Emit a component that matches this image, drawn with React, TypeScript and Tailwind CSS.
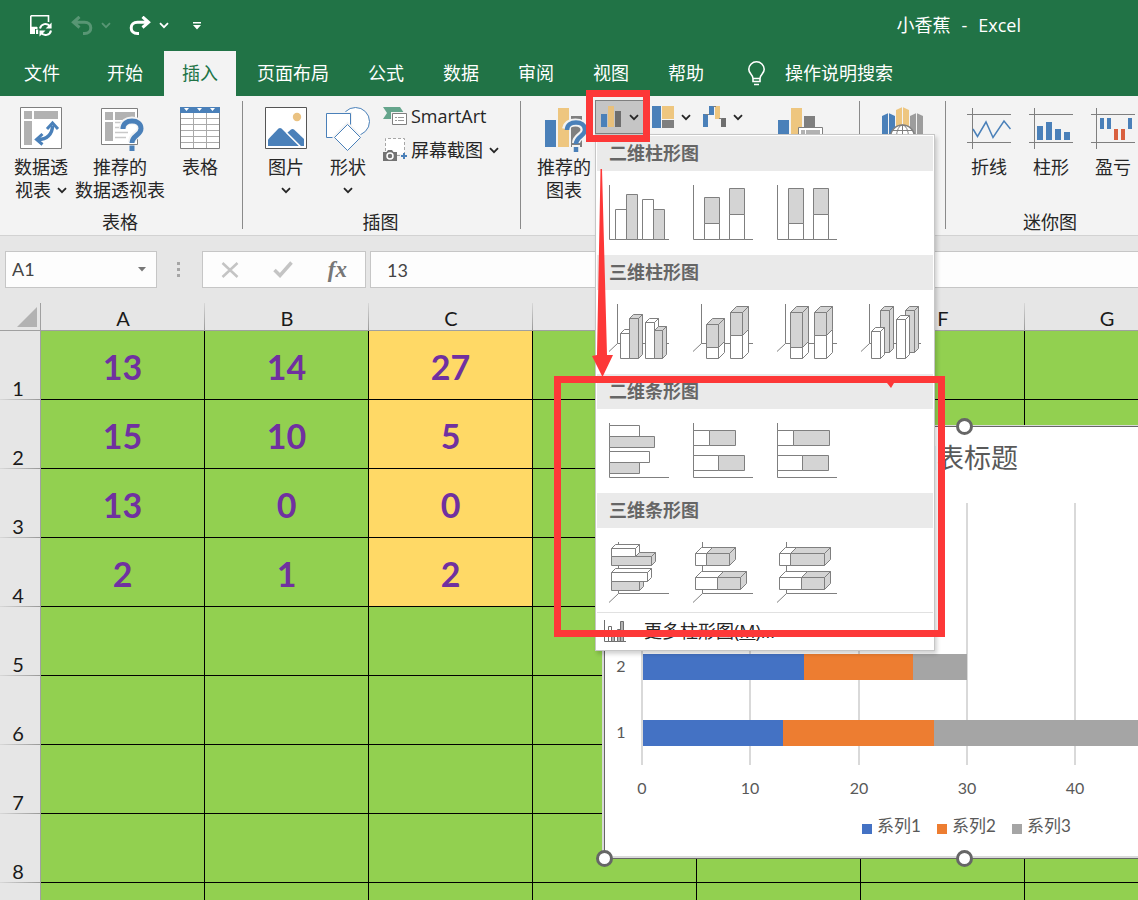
import { useState, type ReactNode } from "react";

const uiFont = "font-['Open_Sans','Noto_Sans_CJK_SC',sans-serif]";
const sheetFont = "font-['Lato','Noto_Sans_CJK_SC',sans-serif]";

const tabs = ["文件", "开始", "插入", "页面布局", "公式", "数据", "审阅", "视图", "帮助"];
const columns = ["A", "B", "C", "D", "E", "F", "G"];
const rows = [
  [13, 14, 27],
  [15, 10, 5],
  [13, 0, 0],
  [2, 1, 2],
  [],
  [],
  [],
  [],
  [],
];

const seriesColors = ["#4472c4", "#ed7d31", "#a5a5a5"];

// horizontal position of a value inside the chart area
const toX = (value: number) => 37 + Math.round(value * 10.83);

const LINE = "#7f7f7f";
const SHADE = "#d4d4d4";

function Chevron({ className = "" }: { className?: string }) {
  return (
    <svg width="10" height="7" viewBox="0 0 10 7" className={`shrink-0 ${className}`} fill="none" stroke="currentColor" strokeWidth="1.8">
      <path d="M1 1.2 5 5.2 9 1.2" />
    </svg>
  );
}

/* ---------- ribbon icons ---------- */

function SaveIcon() {
  return (
    <svg width="23" height="22" viewBox="0 0 23 22" fill="none">
      <path d="M0.8 0.8H18.5V7M0.8 0.8V18.2M0 12.5H7" stroke="#fff" strokeWidth="1.6" />
      <path d="M0 12h7.5v2H5v5H0z" fill="#fff" />
      <path d="M6 14.5h2.2v4.5H6z" fill="#fff" />
      <path d="M10 13.5a5.6 5.6 0 0 1 10-2.2M21 15.5a5.6 5.6 0 0 1-10 2.2" stroke="#fff" strokeWidth="2" />
      <path d="M21.6 7.5v6h-6zM9.5 21.5v-6h6z" fill="#fff" />
    </svg>
  );
}

function UndoIcon() {
  return (
    <svg width="22" height="20" viewBox="0 0 22 20" fill="none" stroke="currentColor" strokeWidth="3">
      <path d="M8.500 .8 2.400 6.300l6.100 5.200M3 6.300h10.500c4 0 6.300 2.400 6.300 5.600s-2.300 5.600-6.300 5.600H12" />
    </svg>
  );
}

function PivotIcon() {
  return (
    <svg width="42" height="42" viewBox="0 0 42 42">
      <path d="M.5.5h41v41H.5z" fill="#fff" stroke="#7f7f7f" />
      <path d="M4 4h8v8H4zM14 4h24v8H14zM4 14h8v24H4z" fill="#b2b2b2" />
      <path d="M18 32.500C27 32.500 32.500 27 32.500 18.500" fill="none" stroke="#4a80b9" strokeWidth="3.400" />
      <path d="m27 22 5.500-6 5.500 6M22.500 27l-6 5.500 6 5" fill="none" stroke="#4a80b9" strokeWidth="3" />
    </svg>
  );
}

function RecommendedPivotIcon() {
  return (
    <svg width="50" height="44" viewBox="-6 0 50 44">
      <path d="M.5 1.500h36v36H.5z" fill="#fff" stroke="#7f7f7f" />
      <path d="M4 5h8v8H4zM14 5h20v8H14zM4 15h8v19H4z" fill="#b2b2b2" />
      <path d="M14 15.500h20M14 20.500h9M14 25.500h13M14 30.500h11" stroke="#c9c9c9" strokeWidth="1.500" />
      <path d="M22 21c0-5 4-7.500 9-7.500s9 2.500 9 7.500c0 7-9 6-9 14M31 38v6" fill="none" stroke="#f3f3f3" strokeWidth="8" />
      <path d="M22 22c0-5.500 4-8 9-8s9 2.500 9 7.500c0 7-9 6.500-9 14.500M31 38.500V44" fill="none" stroke="#4a80b9" strokeWidth="5" />
    </svg>
  );
}

function TableIcon() {
  return (
    <svg width="40" height="42" viewBox="0 0 40 42">
      <path d="M.5.5h39v41H.5z" fill="#fff" stroke="#7f7f7f" />
      <path d="M0 0h40v6H0z" fill="#4a80b9" />
      <path d="M4 1h5L6.500 4zM17 1h5l-2.500 3zM30 1h5l-2.500 3z" fill="#fff" />
      <path d="M1 11.500h38M1 17.500h38M1 23.500h38M1 29.500h38M1 35.500h38M13.500 6v35M26.500 6v35" stroke="#aaa" fill="none" />
    </svg>
  );
}

function PictureIcon() {
  return (
    <svg width="42" height="42" viewBox="0 0 42 42">
      <path d="M.5.5h41v41H.5z" fill="#fff" stroke="#555" />
      <circle cx="32" cy="10" r="4.200" fill="#eac282" />
      <path d="M3 32.500 13.500 21.500q1.500-1 3 0L34 39H3z" fill="#4a80b9" />
      <path d="m22 26 4-3.500q1.500-1 3 0L39 32v7h-4z" fill="#4a80b9" />
      <path d="M21.500 25.500 35.500 39.500" stroke="#fff" strokeWidth="1.300" />
    </svg>
  );
}

function ShapesIcon() {
  return (
    <svg width="44" height="44" viewBox="0 0 44 44" fill="#fff" stroke="#4a80b9">
      <circle cx="29.500" cy="14.500" r="14" />
      <path d="M-1 5h27v28H-1z" fill="#f3f3f3" stroke="none" />
      <path d="M.5 6.500h24v24H.5z" />
      <path d="M21.500 14.500 37 30 21.500 45.500 6 30z" fill="#f3f3f3" stroke="none" />
      <path d="M21.500 17.500 34.500 30.500 21.500 43.500 8.500 30.500z" />
    </svg>
  );
}

function SmartArtIcon() {
  return (
    <svg width="24" height="18" viewBox="0 0 24 18">
      <path d="M0 0h17l4 6-4 6H0l4-6z" fill="#65a58c" />
      <path d="M8 5h17v14H8z" fill="#f3f3f3" />
      <path d="M9.500 6.500h14v11h-14z" fill="#fff" stroke="#7f7f7f" />
      <path d="M12 10.500h2M15 10.500h6M12 13.500h2M15 13.500h6" stroke="#999" />
    </svg>
  );
}

function ScreenshotIcon() {
  return (
    <svg width="24" height="24" viewBox="0 0 24 24">
      <path d="M2.500.5h19V16h-19z" fill="#fff" />
      <path d="M2.500 13V.5h19V15M14 17.500h3" fill="none" stroke="#a6a6a6" strokeDasharray="3 2" />
      <path d="M0 14h3.500l1.500-2h4l1.500 2H14v9H0z" fill="#727272" />
      <circle cx="7" cy="18" r="3" fill="none" stroke="#fff" strokeWidth="1.500" />
      <path d="M21 15v6M18 18h6" stroke="#4a80b9" strokeWidth="2" />
    </svg>
  );
}

function RecommendedChartIcon() {
  return (
    <svg width="46" height="45" viewBox="-4 -1 46 45">
      <path d="M0 12h11v27H0z" fill="#4a80b9" />
      <path d="M13 0h11v39H13z" fill="#eec67f" />
      <path d="M26 8h11v31H26z" fill="#7f7f7f" />
      <path d="M21 21c1-5 5-6.500 9.500-6.500s9 2 9 7.500c0 6-8.500 6.500-8.500 13M31 37v7" fill="none" stroke="#f3f3f3" strokeWidth="8" />
      <path d="M22 22c0-5 4-7.500 9-7.500s9 2.500 9 7.500c0 6-9 6.500-9 14M31 39v5" fill="none" stroke="#4a80b9" strokeWidth="4.500" />
    </svg>
  );
}

function ColumnChartIcon() {
  return (
    <svg width="20" height="22" viewBox="0 0 20 22">
      <path d="M0 8h6v13H0z" fill="#4a80b9" />
      <path d="M7 0h6v21H7z" fill="#e8c07c" />
      <path d="M14 5h6v16h-6z" fill="#6e6e6e" />
    </svg>
  );
}

function TreemapIcon() {
  return (
    <svg width="22" height="22" viewBox="0 0 22 22">
      <path d="M0 0h9v22H0z" fill="#4a80b9" />
      <path d="M10 0h12v13H10z" fill="#eec67f" />
      <path d="M10 14h12v8H10z" fill="#7f7f7f" />
    </svg>
  );
}

function WaterfallIcon() {
  return (
    <svg width="23" height="22" viewBox="0 0 23 22">
      <path d="M0 8h5v13H0zM6 0h5v9H6z" fill="#4a80b9" />
      <path d="M12 0h5v13h-5z" fill="#eec67f" />
      <path d="M18 12h5v9h-5z" fill="#6e6e6e" />
      <path d="M2.500 8.500H6M10 .5h3M16 12.500h3" stroke="#7f7f7f" />
    </svg>
  );
}

function PivotChartIcon() {
  return (
    <svg width="46" height="43" viewBox="0 -1 46 43">
      <path d="M0 12h11v27H0z" fill="#4a80b9" />
      <path d="M13 0h11v39H13z" fill="#eec67f" />
      <path d="M26 8h11v20H26z" fill="#7f7f7f" />
      <path d="M20.500 19.500h24v22h-24z" fill="#fff" stroke="#7f7f7f" />
      <path d="M23 22h4v4h-4zM28 22h14v4H28z" fill="#b2b2b2" />
    </svg>
  );
}

function MapIcon() {
  return (
    <svg width="42" height="44" viewBox="0 0 42 44">
      <path d="M0 9 6.500 6 13 9v30H0z" fill="#4a80b9" />
      <path d="M14 3 20.500 0 27 3v30H14z" fill="#eec67f" />
      <path d="m28 9 6.500-3L41 9v30H28z" fill="#9d9d9d" />
      <path d="M6.500 6v30M20.500 0v20M34.500 6v30" stroke="#f3f3f3" />
      <circle cx="20.500" cy="30" r="12" fill="#fff" stroke="#7f7f7f" strokeWidth="1.500" />
      <path d="M20.500 18v24M8.500 30h24M11 23.500h19" stroke="#7f7f7f" fill="none" />
      <ellipse cx="20.500" cy="30" rx="6" ry="12" fill="none" stroke="#7f7f7f" />
    </svg>
  );
}

function SparkFrame({ children }: { children: ReactNode }) {
  return (
    <svg width="44" height="42" viewBox="0 0 44 42" fill="none">
      <path d="M0 7.500h44M0 35.500h44M5.500 1v41" stroke="#7f7f7f" />
      {children}
    </svg>
  );
}

const sparklines = [
  {
    label: "折线",
    art: <path d="m6 22 4.500 7.500L19 15l7 15.500L37 14l6.500 8" stroke="#4a80b9" strokeWidth="1.500" />,
  },
  {
    label: "柱形",
    art: <path d="M8 19h6v14H8zM17 15h6v18h-6zM26 22h6v11h-6zM35 25h6v8h-6z" fill="#4a80b9" />,
  },
  {
    label: "盈亏",
    art: (
      <>
        <path d="M9 11h4v11H9zM16 11h4v11h-4zM37 11h4v11h-4z" fill="#4a80b9" />
        <path d="M23 22h4v11h-4zM30 22h4v11h-4z" fill="#d9603f" />
      </>
    ),
  },
];

/* ---------- gallery thumbnails ---------- */

type BoxProps = { x: number; y: number; r: number; b: number; d?: number; shade?: boolean };

// x/y/r/b are the edges of the front face, d is the depth of the side faces
function Box({ x, y, r, b, d = 0, shade = false }: BoxProps) {
  return (
    <g fill={shade ? SHADE : "#fff"} stroke={LINE} strokeLinejoin="round">
      {d > 0 ? (
        <>
          <path d={`M${x} ${y}L${x + d} ${y - d}H${r + d}L${r} ${y}Z`} />
          <path d={`M${r} ${y}L${r + d} ${y - d}V${b - d}L${r} ${b}Z`} />
        </>
      ) : null}
      <path d={`M${x} ${y}H${r}V${b}H${x}Z`} />
    </g>
  );
}

type Thumb = { name: string; boxes: BoxProps[] };
type Section = { title: string; axis: string; thumbs: Thumb[] };

const flatAxis = "M.5 2V56.500H60";
const columnAxis3d = "M8.500 2V41.500H60M8.500 41.500 0 49.500";
const barAxis3d = "M9.500 2V53.500H60M9.500 53.500 0 62.500";

const sections: Section[] = [
  {
    title: "二维柱形图",
    axis: flatAxis,
    thumbs: [
      {
        name: "簇状柱形图",
        boxes: [
          { x: 6.5, y: 26.5, r: 17.5, b: 56.5 },
          { x: 17.5, y: 11.5, r: 28.5, b: 56.5, shade: true },
          { x: 33.5, y: 16.5, r: 44.5, b: 56.5 },
          { x: 44.5, y: 26.5, r: 55.5, b: 56.5, shade: true },
        ],
      },
      {
        name: "堆积柱形图",
        boxes: [
          { x: 11.5, y: 40.5, r: 26.5, b: 56.5 },
          { x: 11.5, y: 14.5, r: 26.5, b: 40.5, shade: true },
          { x: 36.5, y: 31.5, r: 51.5, b: 56.5 },
          { x: 36.5, y: 5.5, r: 51.5, b: 31.5, shade: true },
        ],
      },
      {
        name: "百分比堆积柱形图",
        boxes: [
          { x: 11.5, y: 40.5, r: 26.5, b: 56.5 },
          { x: 11.5, y: 5.5, r: 26.5, b: 40.5, shade: true },
          { x: 36.5, y: 31.5, r: 51.5, b: 56.5 },
          { x: 36.5, y: 5.5, r: 51.5, b: 31.5, shade: true },
        ],
      },
    ],
  },
  {
    title: "三维柱形图",
    axis: columnAxis3d,
    thumbs: [
      {
        name: "三维簇状柱形图",
        boxes: [
          { x: 11.5, y: 31.5, r: 20.5, b: 56.5, d: 4 },
          { x: 20.5, y: 16.5, r: 29.5, b: 56.5, d: 4, shade: true },
          { x: 36.5, y: 20.5, r: 45.5, b: 56.5, d: 4 },
          { x: 45.5, y: 28.5, r: 53.5, b: 56.5, d: 4, shade: true },
        ],
      },
      {
        name: "三维堆积柱形图",
        boxes: [
          { x: 13.5, y: 45.5, r: 25.5, b: 56.5, d: 6 },
          { x: 13.5, y: 22.5, r: 25.5, b: 45.5, d: 6, shade: true },
          { x: 37.5, y: 33.5, r: 49.5, b: 56.5, d: 6 },
          { x: 37.5, y: 10.5, r: 49.5, b: 33.5, d: 6, shade: true },
        ],
      },
      {
        name: "三维百分比堆积柱形图",
        boxes: [
          { x: 13.5, y: 45.5, r: 25.5, b: 56.5, d: 6 },
          { x: 13.5, y: 10.5, r: 25.5, b: 45.5, d: 6, shade: true },
          { x: 37.5, y: 33.5, r: 49.5, b: 56.5, d: 6 },
          { x: 37.5, y: 10.5, r: 49.5, b: 33.5, d: 6, shade: true },
        ],
      },
      {
        name: "三维柱形图",
        boxes: [
          { x: 19.5, y: 8.5, r: 28.5, b: 50.5, d: 4, shade: true },
          { x: 10.5, y: 29.5, r: 19.5, b: 56.5, d: 4 },
          { x: 44.5, y: 8.5, r: 53.5, b: 50.5, d: 4, shade: true },
          { x: 35.5, y: 17.5, r: 44.5, b: 56.5, d: 4 },
        ],
      },
    ],
  },
  {
    title: "二维条形图",
    axis: flatAxis,
    thumbs: [
      {
        name: "簇状条形图",
        boxes: [
          { x: 0.5, y: 4.5, r: 30.5, b: 15.5 },
          { x: 0.5, y: 15.5, r: 45.5, b: 26.5, shade: true },
          { x: 0.5, y: 30.5, r: 40.5, b: 41.5 },
          { x: 0.5, y: 41.5, r: 30.5, b: 52.5, shade: true },
        ],
      },
      {
        name: "堆积条形图",
        boxes: [
          { x: 0.5, y: 9.5, r: 16.5, b: 24.5 },
          { x: 16.5, y: 9.5, r: 42.5, b: 24.5, shade: true },
          { x: 0.5, y: 34.5, r: 25.5, b: 49.5 },
          { x: 25.5, y: 34.5, r: 51.5, b: 49.5, shade: true },
        ],
      },
      {
        name: "百分比堆积条形图",
        boxes: [
          { x: 0.5, y: 9.5, r: 16.5, b: 24.5 },
          { x: 16.5, y: 9.5, r: 52.5, b: 24.5, shade: true },
          { x: 0.5, y: 34.5, r: 25.5, b: 49.5 },
          { x: 25.5, y: 34.5, r: 51.5, b: 49.5, shade: true },
        ],
      },
    ],
  },
  {
    title: "三维条形图",
    axis: barAxis3d,
    thumbs: [
      {
        name: "三维簇状条形图",
        boxes: [
          { x: 2.5, y: 16.5, r: 42.5, b: 25.5, d: 4, shade: true },
          { x: 2.5, y: 8.5, r: 26.5, b: 16.5, d: 4 },
          { x: 2.5, y: 41.5, r: 30.5, b: 50.5, d: 4, shade: true },
          { x: 2.5, y: 32.5, r: 38.5, b: 41.5, d: 4 },
        ],
      },
      {
        name: "三维堆积条形图",
        boxes: [
          { x: 2.5, y: 13.5, r: 13.5, b: 25.5, d: 6 },
          { x: 13.5, y: 13.5, r: 36.5, b: 25.5, d: 6, shade: true },
          { x: 2.5, y: 37.5, r: 24.5, b: 49.5, d: 6 },
          { x: 24.5, y: 37.5, r: 47.5, b: 49.5, d: 6, shade: true },
        ],
      },
      {
        name: "三维百分比堆积条形图",
        boxes: [
          { x: 2.5, y: 13.5, r: 13.5, b: 25.5, d: 6 },
          { x: 13.5, y: 13.5, r: 47.5, b: 25.5, d: 6, shade: true },
          { x: 2.5, y: 37.5, r: 24.5, b: 49.5, d: 6 },
          { x: 24.5, y: 37.5, r: 47.5, b: 49.5, d: 6, shade: true },
        ],
      },
    ],
  },
];

function ChartGallery() {
  return (
    <div className="absolute left-0 top-[34px] z-20 w-[340px] border border-[#c6c6c6] bg-white p-px shadow-[2px_3px_4px_rgba(0,0,0,.18)]">
      {sections.map((section) => (
        <section key={section.title}>
          <h3 className="h-[35px] bg-[#eaeaea] pl-3 text-[18px] font-bold leading-[34px] text-[#666]">{section.title}</h3>
          <div className="flex">
            {section.thumbs.map((thumb) => (
              <button key={thumb.name} type="button" aria-label={thumb.name} className="p-3">
                <svg width="60" height="60" viewBox="0 0 60 60" className="overflow-visible">
                  <path d={section.axis} fill="none" stroke={LINE} />
                  {thumb.boxes.map((box, index) => (
                    <Box key={index} {...box} />
                  ))}
                </svg>
              </button>
            ))}
          </div>
        </section>
      ))}
      <button type="button" className="flex h-[37px] w-full items-center border-t border-[#e1e1e1] pl-[7px] text-[18px] text-[#262626]">
        <svg width="22" height="22" viewBox="0 0 22 22" fill="#fff" stroke="#6e6e6e" className="mr-[18px] shrink-0">
          <path d="M.5 0v21.500H22" fill="none" />
          <path d="M4.500 6.500h3v15h-3zM10.500 12.500h3v9h-3z" />
          <path d="M7.500 11.500h3v10h-3zM13.500 9.500h3v12h-3zM16.500 1.500h3v20h-3z" fill="#b2b2b2" />
        </svg>
        <span>
          更多柱形图(<u>M</u>)...
        </span>
      </button>
    </div>
  );
}

/* ---------- ribbon ---------- */

type BigButtonProps = { icon: ReactNode; lines: string[]; menu?: "inline" | "below"; className: string };

function BigButton({ icon, lines, menu, className }: BigButtonProps) {
  return (
    <button type="button" className={`flex shrink-0 flex-col items-center leading-[23px] ${className}`}>
      <span className="mb-1 flex h-[46px] items-start pt-px">{icon}</span>
      {lines.map((line, index) => (
        <span key={line} className="flex items-center gap-1.5 whitespace-nowrap">
          {line}
          {menu === "inline" && index === lines.length - 1 ? <Chevron /> : null}
        </span>
      ))}
      {menu === "below" ? <Chevron className="mt-2" /> : null}
    </button>
  );
}

function Group({ title, className = "", children }: { title: string; className?: string; children: ReactNode }) {
  return (
    <div className={`flex shrink-0 flex-col pt-2.5 ${className}`}>
      <div className="flex h-[105px] items-start">{children}</div>
      <p className="pr-0.5 text-center leading-[23px]">{title}</p>
    </div>
  );
}

function Divider() {
  return <div className="mt-[5px] h-32 w-px shrink-0 bg-[#8a8a8a]" />;
}

function Ribbon() {
  const [open, setOpen] = useState(true);

  return (
    <div className="flex h-[140px] shrink-0 border-b border-[#d2d2d2] bg-[#f3f3f3] text-[18px] text-[#262626]">
      <Group title="表格" className="px-2.5">
        <BigButton icon={<PivotIcon />} lines={["数据透", "视表"]} menu="inline" className="w-[62px]" />
        <BigButton icon={<RecommendedPivotIcon />} lines={["推荐的", "数据透视表"]} className="w-24" />
        <BigButton icon={<TableIcon />} lines={["表格"]} className="w-16" />
      </Group>
      <Divider />
      <Group title="插图" className="w-[277px] px-3">
        <BigButton icon={<PictureIcon />} lines={["图片"]} menu="below" className="w-[62px]" />
        <BigButton icon={<ShapesIcon />} lines={["形状"]} menu="below" className="w-[62px]" />
        <div className="ml-1 flex flex-col gap-3">
          <button type="button" className="flex items-center gap-1 whitespace-nowrap leading-5">
            <SmartArtIcon /> SmartArt
          </button>
          <button type="button" className="flex items-center gap-1 whitespace-nowrap leading-5">
            <ScreenshotIcon /> 屏幕截图 <Chevron className="ml-0.5" />
          </button>
        </div>
      </Group>
      <Divider />
      <Group title="图表" className="w-[338px] pl-3">
        <BigButton icon={<RecommendedChartIcon />} lines={["推荐的", "图表"]} className="w-[62px]" />
        <div className="-mt-1.5 flex gap-2">
          <div className="relative">
            <button
              type="button"
              aria-label="插入柱形图或条形图"
              aria-expanded={open}
              onClick={() => setOpen(!open)}
              className="flex h-[34px] w-[49px] items-center gap-2 border border-[#7f7f7f] bg-[#c5c5c5] pl-[5px]"
            >
              <ColumnChartIcon /> <Chevron />
            </button>
            {open ? <ChartGallery /> : null}
          </div>
          <button type="button" aria-label="插入层次结构图表" className="flex h-[34px] items-center gap-[7px]">
            <TreemapIcon /> <Chevron />
          </button>
          <button type="button" aria-label="插入瀑布图" className="ml-1 flex h-[34px] items-center gap-[7px]">
            <WaterfallIcon /> <Chevron />
          </button>
        </div>
        <BigButton icon={<PivotChartIcon />} lines={["数据", "透视图"]} className="ml-5 w-[76px]" />
      </Group>
      <Divider />
      <Group title="演示" className="w-[85px] px-1">
        <BigButton icon={<MapIcon />} lines={["三维地", "图"]} className="w-[77px]" />
      </Group>
      <Divider />
      <Group title="迷你图" className="px-3">
        {sparklines.map((item) => (
          <BigButton key={item.label} icon={<SparkFrame>{item.art}</SparkFrame>} lines={[item.label]} className="w-[62px]" />
        ))}
      </Group>
    </div>
  );
}

function TitleBar() {
  return (
    <header className="flex h-[51px] items-center bg-[#217346] pl-[30px] pr-[117px] text-white">
      <button type="button" aria-label="保存">
        <SaveIcon />
      </button>
      <button type="button" aria-label="撤消" className="ml-[18px] flex items-center gap-2 text-white/25">
        <UndoIcon /> <Chevron />
      </button>
      <button type="button" aria-label="恢复" className="ml-[18px] flex items-center gap-2">
        <span className="-scale-x-100">
          <UndoIcon />
        </span>
        <Chevron />
      </button>
      <button type="button" aria-label="自定义快速访问工具栏" className="ml-6">
        <svg width="8" height="8" viewBox="0 0 8 8" fill="#fff">
          <path d="M0 0h8v1.500H0zM0 3h8L4 7.500z" />
        </svg>
      </button>
      <h1 className="ml-auto flex gap-[11px] text-[18px]">
        <span>小香蕉</span>
        <span>-</span>
        <span>Excel</span>
      </h1>
    </header>
  );
}

function TabBar() {
  return (
    <nav className="flex h-[45px] items-stretch gap-[3px] bg-[#217346] pl-1.5 text-[18px] text-white">
      {tabs.map((tab) => (
        <button
          key={tab}
          type="button"
          className={`shrink-0 px-[18px] ${tab === "文件" ? "mr-2" : ""} ${tab === "插入" ? "bg-[#f3f3f3] text-[#217346]" : ""}`}
        >
          {tab}
        </button>
      ))}
      <button type="button" className="ml-[23px] flex shrink-0 items-center gap-5">
        <svg width="17" height="25" viewBox="0 0 17 25" fill="none" stroke="#fff" strokeWidth="1.600">
          <path d="M5 17.500c0-4-4.200-4.500-4.200-9.200A7.700 7.700 0 0 1 8.500.8a7.700 7.700 0 0 1 7.700 7.500c0 4.700-4.200 5.200-4.200 9.200zM5 17.500v3h7v-3M6 23.500h5" />
        </svg>
        操作说明搜索
      </button>
    </nav>
  );
}

function FormulaBar() {
  return (
    <div className={`flex h-[67px] shrink-0 items-start pl-[5px] pt-[15px] text-[18px] text-[#444] ${sheetFont}`}>
      <div className="flex h-[37px] w-[152px] shrink-0 items-center border border-[#c6c6c6] bg-[#fdfdfd] pl-1.5 pr-2.5">
        <input aria-label="名称框" defaultValue="A1" className="min-w-0 flex-1 bg-transparent outline-none" />
        <svg width="8" height="5" viewBox="0 0 8 5" fill="#777">
          <path d="M0 0h8L4 4.500z" />
        </svg>
      </div>
      <svg width="3" height="15" viewBox="0 0 3 15" fill="#a6a6a6" className="ml-5 mt-[11px] shrink-0">
        <path d="M0 0h3v3H0zM0 6h3v3H0zM0 12h3v3H0z" />
      </svg>
      <div className="ml-[22px] flex h-[37px] w-[164px] shrink-0 items-center justify-between border border-[#c6c6c6] bg-[#fdfdfd] px-[18px]">
        <button type="button" aria-label="取消">
          <svg width="18" height="16" viewBox="0 0 18 16" stroke="#c4c4c4" strokeWidth="2.500" fill="none">
            <path d="m1.500 1 15 14M16.500 1 1.500 15" />
          </svg>
        </button>
        <button type="button" aria-label="输入">
          <svg width="20" height="17" viewBox="0 0 20 17" stroke="#c4c4c4" strokeWidth="3.500" fill="none">
            <path d="M1.500 9 7 14.500 18.500 1.500" />
          </svg>
        </button>
        <button
          type="button"
          aria-label="插入函数"
          className="font-['Liberation_Serif',serif] text-[23px] font-bold italic leading-[30px] text-[#777]"
        >
          fx
        </button>
      </div>
      <input
        aria-label="编辑栏"
        defaultValue="13"
        className="ml-1 h-[37px] min-w-0 flex-1 border border-r-0 border-[#c6c6c6] bg-[#fdfdfd] pl-4 outline-none"
      />
    </div>
  );
}

/* ---------- sheet ---------- */

function Handle({ className }: { className: string }) {
  return <span className={`absolute h-[17px] w-[17px] rounded-full border-[3px] border-[#666] bg-white ${className}`} />;
}

function StackedBarChart() {
  const data = rows.slice(0, 4);

  return (
    <div className="absolute left-[602px] top-[122px] z-10 w-[723px] border-l-2 border-t border-[#d9d9d9]">
      <div className="border border-[#666] bg-white">
        <svg width="719" height="431" viewBox="0 0 719 431" className="block" fill="#595959">
          <path d="M0 429h719v2H0z" fill="#d9d9d9" />
          <text x="359" y="41" textAnchor="middle" className="text-[27px]">
            图表标题
          </text>
          {[0, 10, 20, 30, 40, 50, 60].map((tick) => (
            <g key={tick}>
              <rect x={toX(tick) - 1} y="76" width="2" height="262" fill="#d9d9d9" />
              <text x={toX(tick)} y="367" textAnchor="middle" className="text-[16px]">
                {tick}
              </text>
            </g>
          ))}
          {data.map((values, row) => (
            <g key={row}>
              <text x="16" y={311 - row * 66} textAnchor="middle" className="text-[16px]">
                {row + 1}
              </text>
              {values.map((value, index) => {
                const start = values.slice(0, index).reduce((sum, item) => sum + item, 0);
                return (
                  <rect
                    key={index}
                    x={toX(start)}
                    y={293 - row * 66}
                    width={toX(start + value) - toX(start)}
                    height="26"
                    fill={seriesColors[index]}
                  />
                );
              })}
            </g>
          ))}
          <path d="M36 76h2v262h-2z" fill="#d9d9d9" />
          {seriesColors.map((color, index) => (
            <g key={color}>
              <rect x={257 + index * 75} y="397" width="10" height="10" fill={color} />
              <text x={272 + index * 75} y="405" className="text-[17px]">
                {`系列${index + 1}`}
              </text>
            </g>
          ))}
        </svg>
      </div>
      <Handle className="-left-2 -top-2" />
      <Handle className="-top-2 left-[352px]" />
      <Handle className="-bottom-2 -left-2" />
      <Handle className="-bottom-2 left-[352px]" />
    </div>
  );
}

function Sheet() {
  return (
    <div className={`relative min-h-0 flex-1 overflow-hidden ${sheetFont}`}>
      <table className="w-max table-fixed border-separate border-spacing-0 text-center text-[20px] text-[#1a1a1a]">
        <thead>
          <tr className="h-7">
            <th className="w-[41px] border-b border-r border-[#a0a0a0] p-0 align-top">
              <svg width="20" height="20" viewBox="0 0 20 20" className="ml-[17px] mt-1 block" fill="#b2b2b2">
                <path d="M20 0v20H0z" />
              </svg>
            </th>
            {columns.map((column) => (
              <th
                key={column}
                scope="col"
                className="w-[164px] border-b border-[#a0a0a0] bg-linear-to-b from-[#d8d8d8] to-[#999] bg-[length:1px_100%] bg-right bg-no-repeat p-0 pt-1 font-normal leading-[23px]"
              >
                {column}
              </th>
            ))}
          </tr>
        </thead>
        <tbody>
          {rows.map((values, row) => (
            <tr key={row} className="h-[69px]">
              <th
                scope="row"
                className="border-r border-[#a0a0a0] bg-linear-to-r from-[#d8d8d8] to-[#999] bg-[length:100%_1px] bg-bottom bg-no-repeat p-0 pr-1 align-bottom font-normal leading-[24px]"
              >
                {row + 1}
              </th>
              {columns.map((column, index) => (
                <td
                  key={column}
                  className={`border-b border-r border-black p-0 pt-1 text-[34px] font-bold leading-[40px] text-[#7030a0] ${
                    column === "C" && row < 4 ? "bg-[#ffd966]" : "bg-[#92d050]"
                  }`}
                >
                  {values[index]}
                </td>
              ))}
            </tr>
          ))}
        </tbody>
      </table>
      <StackedBarChart />
    </div>
  );
}

// red marker boxes and the arrow pointing at the bar chart types
function Markup() {
  return (
    <div className="pointer-events-none absolute inset-0 z-30">
      <div className="absolute left-[586px] top-[90px] h-[52px] w-16 border-[7px] border-[#fd3838]" />
      <div className="absolute left-[554px] top-[376px] h-[261px] w-[391px] border-[7px] border-[#fd3838]" />
      <svg width="22" height="210" viewBox="0 0 22 210" className="absolute left-[592px] top-[169px]" fill="#fd3838">
        <path d="M8.500 0h1.500l5 186h6L10.500 208 0 187l5-1z" />
      </svg>
      <svg width="8" height="5" viewBox="0 0 8 5" className="absolute left-[887px] top-[383px]" fill="#fd3838">
        <path d="M0 0h7L4 5z" />
      </svg>
    </div>
  );
}

export default function App() {
  return (
    <div className={`relative flex h-screen flex-col overflow-hidden bg-[#e6e6e6] ${uiFont}`}>
      <TitleBar />
      <TabBar />
      <Ribbon />
      <FormulaBar />
      <Sheet />
      <Markup />
    </div>
  );
}
